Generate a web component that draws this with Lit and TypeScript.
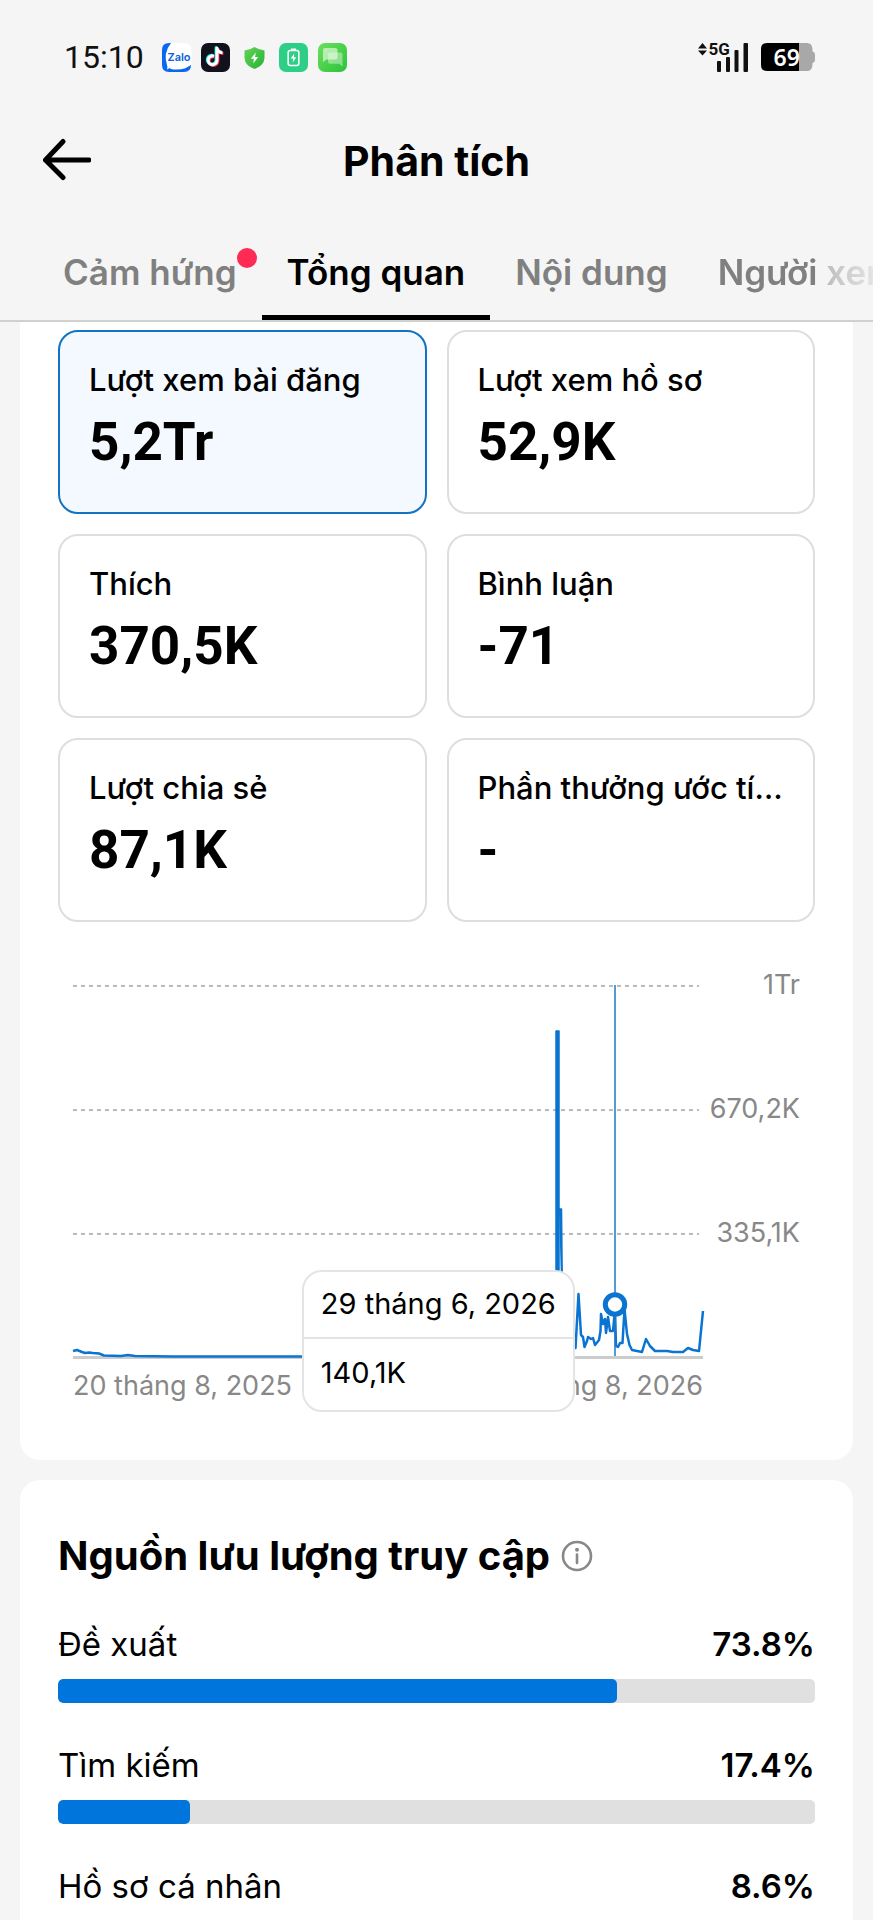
import { LitElement, html, css, svg } from "lit";
import { customElement, property } from "lit/decorators.js";
import { classMap } from "lit/directives/class-map.js";

@customElement("status-bar")
class StatusBar extends LitElement {
  static styles = css`
    :host {
      display: flex;
      align-items: center;
      justify-content: space-between;
      height: 114px;
      padding: 0 58px 0 64px;
      font-family: Roboto, sans-serif;
      color: #111;
    }
    .side {
      display: flex;
      align-items: center;
      gap: 10px;
    }
    .clock {
      font-size: 32px;
      line-height: 36px;
      margin-right: 8px;
    }
    svg {
      display: block;
      overflow: visible;
    }
    .net {
      font: 700 17px Roboto, sans-serif;
    }
    .zalo {
      font: 600 11px Inter, sans-serif;
    }
    .level {
      font: 600 23px "Noto Sans", sans-serif;
    }
  `;

  render() {
    const note = "M13 13.200a4.400 4.400 0 1 0 3 4.300V5.300c.6 3 2.600 4.300 5.500 4.500";
    return html`
      <div class="side">
        <span class="clock">15:10</span>
        <svg width="29" height="29" viewBox="0 0 29 29" aria-label="Zalo">
          <path d="M7 0H14L14 26L29 22Q29 29 22 29H7Q0 29 0 22V7Q0 0 7 0Z" fill="#0a68f0" />
          <path d="M9 0H22Q29 0 29.500 7V21Q25 26.500 14 26.500Q9 26.500 7.500 25L5 26.500Q6 24.500 5 22Q1 10 9 0Z" fill="#fff" />
          <text class="zalo" x="17" y="17.500" text-anchor="middle" fill="#0a62dc">Zalo</text>
        </svg>
        <svg width="29" height="29" viewBox="0 0 29 29" aria-label="TikTok">
          <rect width="29" height="29" rx="7" fill="#12121c" />
          <g fill="none" stroke-width="3" stroke-linejoin="round">
            <path d=${note} stroke="#25f4ee" transform="translate(-.9 -.7)" />
            <path d=${note} stroke="#fe2c55" transform="translate(.9 .7)" />
            <path d=${note} stroke="#fff" />
          </g>
        </svg>
        <svg width="29" height="29" viewBox="0 0 29 29" aria-hidden="true">
          <defs>
            <linearGradient id="sh" x1="0" x2="1" y2="1">
              <stop offset="0" stop-color="#62d456" />
              <stop offset="1" stop-color="#27b136" />
            </linearGradient>
          </defs>
          <path d="M14.500 4Q19 7 24.500 7.500V15Q24 22.500 14.500 26Q5 22.500 4.500 15V7.500Q10 7 14.500 4Z" fill="url(#sh)" />
          <path d="M15.800 9.500L10.800 15.800H14L13.200 20.500L18.200 14H15Z" fill="#fff" />
        </svg>
        <svg width="29" height="29" viewBox="0 0 29 29" aria-hidden="true">
          <rect width="29" height="29" rx="7" fill="#2ccf85" />
          <rect x="9.200" y="7.500" width="10.600" height="15" rx="2" fill="none" stroke="#fff" stroke-width="1.600" />
          <path d="M12 6.300H17" stroke="#fff" stroke-width="1.600" />
          <path d="M15.300 10.500L11.700 15.600H14.200L13.700 19.500L17.300 14.300H14.800Z" fill="#fff" />
        </svg>
        <svg width="29" height="29" viewBox="0 0 29 29" aria-hidden="true">
          <defs>
            <linearGradient id="ch" x1="0" x2="1" y2="1">
              <stop offset="0" stop-color="#6be05c" />
              <stop offset="1" stop-color="#2cc23c" />
            </linearGradient>
          </defs>
          <rect width="29" height="29" rx="7" fill="url(#ch)" />
          <path d="M12 9.500H22.500Q24.500 9.500 24.500 11.500V23.500L21 20.800H12Q10 20.800 10 18.800V11.500Q10 9.500 12 9.500Z" fill="#fff" opacity=".4" />
          <path d="M7 5H17.500Q19.500 5 19.500 7V14.500Q19.500 16.500 17.500 16.500H8.500L5 19V7Q5 5 7 5Z" fill="#e8fbe4" opacity=".65" />
        </svg>
      </div>
      <div class="side">
        <svg width="53" height="30" viewBox="0 0 53 30" aria-label="5G">
          <path d="M0 6.500L4.500 1L9 6.500ZM0 8.500H9L4.500 13.500Z" fill="#111" />
          <text class="net" x="10.500" y="13" fill="#111">5G</text>
          <g fill="#111">
            <rect x="19" y="19" width="4" height="11" rx="1" />
            <rect x="28" y="15" width="4" height="15" rx="1" />
            <rect x="36.500" y="8" width="4" height="22" rx="1" />
            <rect x="45.500" y="1" width="4.500" height="29" rx="1" />
          </g>
        </svg>
        <svg width="54" height="28" viewBox="0 0 54 28" aria-label="69%">
          <path d="M38 0H46Q51 0 51.500 6V8.500Q54 9 54 11.500V17Q54 19.500 51.500 20V22Q51 28 46 28H38Z" fill="#a8a8a8" />
          <path d="M6 0H38V28H6Q0 28 0 22V6Q0 0 6 0Z" fill="#000" />
          <text class="level" x="12.500" y="22.500" fill="#fff">69</text>
        </svg>
      </div>
    `;
  }
}

@customElement("page-header")
class PageHeader extends LitElement {
  static styles = css`
    :host {
      display: block;
      font-family: Inter, "Noto Sans", sans-serif;
    }
    .bar {
      display: grid;
      grid-template-columns: 48px 1fr 48px;
      align-items: center;
      height: 92px;
      padding: 0 43px;
    }
    .back {
      border: 0;
      padding: 0;
      background: none;
      width: 48px;
      height: 48px;
    }
    .back svg {
      display: block;
    }
    h1 {
      margin: 2px 0 0;
      text-align: center;
      font-size: 41px;
      line-height: 48px;
      font-weight: 700;
    }
    .tabs {
      display: flex;
      height: 114px;
      padding-left: 38px;
      border-bottom: 2px solid #d0d0d0;
      overflow: hidden;
    }
    .tab {
      position: relative;
      flex: none;
      display: flex;
      align-items: center;
      box-sizing: border-box;
      padding: 36px 25px 14px;
      border: 0;
      border-bottom: 5px solid transparent;
      background: none;
      color: #808080;
      font: 600 35px/44px Inter, "Noto Sans", sans-serif;
      white-space: nowrap;
    }
    .tab.on {
      color: #000;
      border-color: #000;
    }
    .dot {
      position: absolute;
      top: 42px;
      right: 5px;
      width: 20px;
      height: 20px;
      border-radius: 50%;
      background: #fe2c55;
    }
    .fade {
      mask-image: linear-gradient(to right, #000 122px, rgb(0 0 0 / 0.45) 136px, rgb(0 0 0 / 0.15) 180px);
    }
  `;

  tabs = [
    { name: "Cảm hứng", dot: true },
    { name: "Tổng quan", on: true },
    { name: "Nội dung" },
    { name: "Người xem", fade: true },
  ];

  render() {
    return html`
      <div class="bar">
        <button class="back" aria-label="Quay lại">
          <svg width="48" height="48" viewBox="0 0 48 48" fill="none" stroke="#000" stroke-width="5" stroke-linecap="round" stroke-linejoin="round">
            <path d="M20 5.500L2.500 24L20 41.500M2.500 24H46" />
          </svg>
        </button>
        <h1>Phân tích</h1>
      </div>
      <div class="tabs" role="tablist">
        ${this.tabs.map(
          (t) => html`<button
            role="tab"
            aria-selected=${t.on ? "true" : "false"}
            class=${classMap({ tab: true, on: !!t.on, fade: !!t.fade })}
          >${t.name}${t.dot ? html`<span class="dot"></span>` : ""}</button>`
        )}
      </div>
    `;
  }
}

@customElement("metric-card")
class MetricCard extends LitElement {
  @property() label = "";
  @property() value = "";
  @property({ type: Boolean }) selected = false;

  static styles = css`
    :host {
      display: block;
      min-width: 0;
    }
    .card {
      display: flex;
      flex-direction: column;
      box-sizing: border-box;
      width: 100%;
      height: 184px;
      padding: 28px 22px 0 29px;
      border: 2px solid #dedede;
      border-radius: 20px;
      background: #fff;
      color: #000;
      text-align: left;
    }
    .card.on {
      border-color: #1273c4;
      background: #f4f9ff;
    }
    .label {
      align-self: stretch;
      font: 500 31px/40px Inter, "Noto Sans", sans-serif;
      overflow: hidden;
      text-overflow: ellipsis;
      white-space: nowrap;
    }
    .value {
      margin-top: 10px;
      font: 700 53px/64px Roboto, sans-serif;
    }
  `;

  render() {
    return html`<button class=${classMap({ card: true, on: this.selected })} aria-pressed=${this.selected ? "true" : "false"}>
      <span class="label">${this.label}</span>
      <span class="value">${this.value}</span>
    </button>`;
  }
}

@customElement("views-chart")
class ViewsChart extends LitElement {
  static styles = css`
    :host {
      display: flex;
      margin: 47px 15px 0;
      font-family: Inter, "Noto Sans", sans-serif;
      font-size: 27px;
      line-height: 32px;
      color: #888;
    }
    .plot {
      position: relative;
      flex: 630;
      min-width: 0;
    }
    .plot svg {
      display: block;
      width: 100%;
      overflow: visible;
    }
    .dates {
      display: flex;
      justify-content: space-between;
      margin-top: 11px;
    }
    .scale {
      flex: 97;
      min-width: 0;
      display: flex;
      flex-direction: column;
      align-items: flex-end;
      white-space: nowrap;
    }
    .tick {
      height: 124px;
    }
    .tip {
      position: absolute;
      top: 301px;
      right: calc(14% + 40px);
      border: 2px solid #e4e4e4;
      border-radius: 20px;
      background: #fff;
      color: #000;
      font-size: 29px;
      line-height: 34px;
      white-space: nowrap;
    }
    .tip div {
      padding: 15px 17px 16px;
    }
    .tip div + div {
      padding: 17px 17px 20px;
      border-top: 2px solid #e4e4e4;
    }
  `;

  render() {
    const grid = [17, 141, 265];
    return html`
      <div class="plot">
        <svg viewBox="0 0 630 390" role="img" aria-label="Lượt xem bài đăng">
          ${grid.map((y) => svg`<path d="M0 ${y}H626" stroke="#bbb" stroke-width="2" stroke-dasharray="4 4" />`)}
          <path d="M0 388.500H630" stroke="#ccc" stroke-width="3" />
          <g fill="none" stroke="#0a74d0" stroke-width="2.500" stroke-linejoin="round">
            <path d="M0 382L4 381L9 383L12 384L16 383.500L20 384L26 384.500L31 386.500L48 387L55 386L62 387L100 387.500L240 387.500L440 387L466 376L482 368" />
            <path d="M483 386V62H486V386M486 240H488.500L490 386" fill="#0a74d0" stroke-width="1.500" />
            <path d="M490 350L496 378L502.500 379L505.500 325L508 366L510 368L511.500 378L514 372L515 368L518 370L520 369L522 376L526 371L527.500 362L528 345L530 355L532 350L533 364L535 348L537 362L540 362L542 340L543 377L545 378L547 374L549.500 374L551.500 340L554 365L556.500 376L559 381L569 383L573 370L577 377L582 382L594 382L600 383L610 383L615 379L620 381L626 382L630 342" />
          </g>
          <path d="M542 16V387" stroke="#1b78c4" stroke-width="1.500" />
          <circle cx="542" cy="335.500" r="9.700" fill="#fff" stroke="#0a74d0" stroke-width="5" />
        </svg>
        <div class="dates"><span>20 tháng 8, 2025</span><span>19 tháng 8, 2026</span></div>
        <div class="tip" role="tooltip">
          <div>29 tháng 6, 2026</div>
          <div>140,1K</div>
        </div>
      </div>
      <div class="scale">
        <div class="tick">1Tr</div>
        <div class="tick">670,2K</div>
        <div class="tick">335,1K</div>
      </div>
    `;
  }
}

@customElement("traffic-row")
class TrafficRow extends LitElement {
  @property() label = "";
  @property({ type: Number }) share = 0;

  static styles = css`
    :host {
      display: block;
      font: 400 33px/40px Inter, "Noto Sans", sans-serif;
    }
    .line {
      display: flex;
      justify-content: space-between;
    }
    .pct {
      font-weight: 600;
    }
    .track {
      height: 24px;
      margin-top: 15px;
      border-radius: 5px;
      background: #e0e0e0;
      overflow: hidden;
    }
    .fill {
      height: 100%;
      border-radius: 5px;
      background: #0075dc;
    }
  `;

  render() {
    return html`
      <div class="line"><span>${this.label}</span><span class="pct">${this.share}%</span></div>
      <div class="track"><div class="fill" style="width:${this.share}%"></div></div>
    `;
  }
}

@customElement("app-root")
class AppRoot extends LitElement {
  static styles = css`
    :host {
      display: flex;
      flex-direction: column;
      height: 100vh;
      background: #f5f5f5;
      color: #000;
      font-family: Inter, "Noto Sans", sans-serif;
    }
    main {
      flex: 1;
      min-height: 0;
      overflow-y: auto;
      scrollbar-width: none;
      padding: 0 20px;
    }
    .panel {
      padding: 8px 38px 58px;
      background: #fff;
      border-radius: 0 0 20px 20px;
    }
    .panel + .panel {
      margin-top: 20px;
      padding-top: 50px;
      border-radius: 20px;
    }
    .cards {
      display: grid;
      grid-template-columns: repeat(2, minmax(0, 1fr));
      gap: 20px;
    }
    .head {
      display: flex;
      align-items: center;
      gap: 11px;
    }
    h2 {
      margin: 0;
      font-size: 40px;
      line-height: 52px;
      font-weight: 700;
    }
    .info {
      display: block;
      border: 0;
      padding: 0;
      background: none;
    }
    .info svg {
      display: block;
    }
    .rows {
      display: flex;
      flex-direction: column;
      gap: 42px;
      margin-top: 42px;
    }
  `;

  metrics = [
    ["Lượt xem bài đăng", "5,2Tr"],
    ["Lượt xem hồ sơ", "52,9K"],
    ["Thích", "370,5K"],
    ["Bình luận", "-71"],
    ["Lượt chia sẻ", "87,1K"],
    ["Phần thưởng ước tính", "-"],
  ];

  sources: [string, number][] = [
    ["Đề xuất", 73.8],
    ["Tìm kiếm", 17.4],
    ["Hồ sơ cá nhân", 8.6],
  ];

  render() {
    return html`
      <status-bar></status-bar>
      <page-header></page-header>
      <main>
        <section class="panel">
          <div class="cards">
            ${this.metrics.map(
              ([label, value], i) => html`<metric-card .label=${label} .value=${value} .selected=${i === 0}></metric-card>`
            )}
          </div>
          <views-chart></views-chart>
        </section>
        <section class="panel">
          <div class="head">
            <h2>Nguồn lưu lượng truy cập</h2>
            <button class="info" aria-label="Thông tin">
              <svg width="32" height="32" viewBox="0 0 32 32" fill="none" stroke="#888" stroke-width="2.600">
                <circle cx="16" cy="16" r="14" />
                <path d="M16 14.500V23" stroke-linecap="round" />
                <circle cx="16" cy="9.800" r="2" fill="#888" stroke="none" />
              </svg>
            </button>
          </div>
          <div class="rows">
            ${this.sources.map(([label, share]) => html`<traffic-row .label=${label} .share=${share}></traffic-row>`)}
          </div>
        </section>
      </main>
    `;
  }
}
